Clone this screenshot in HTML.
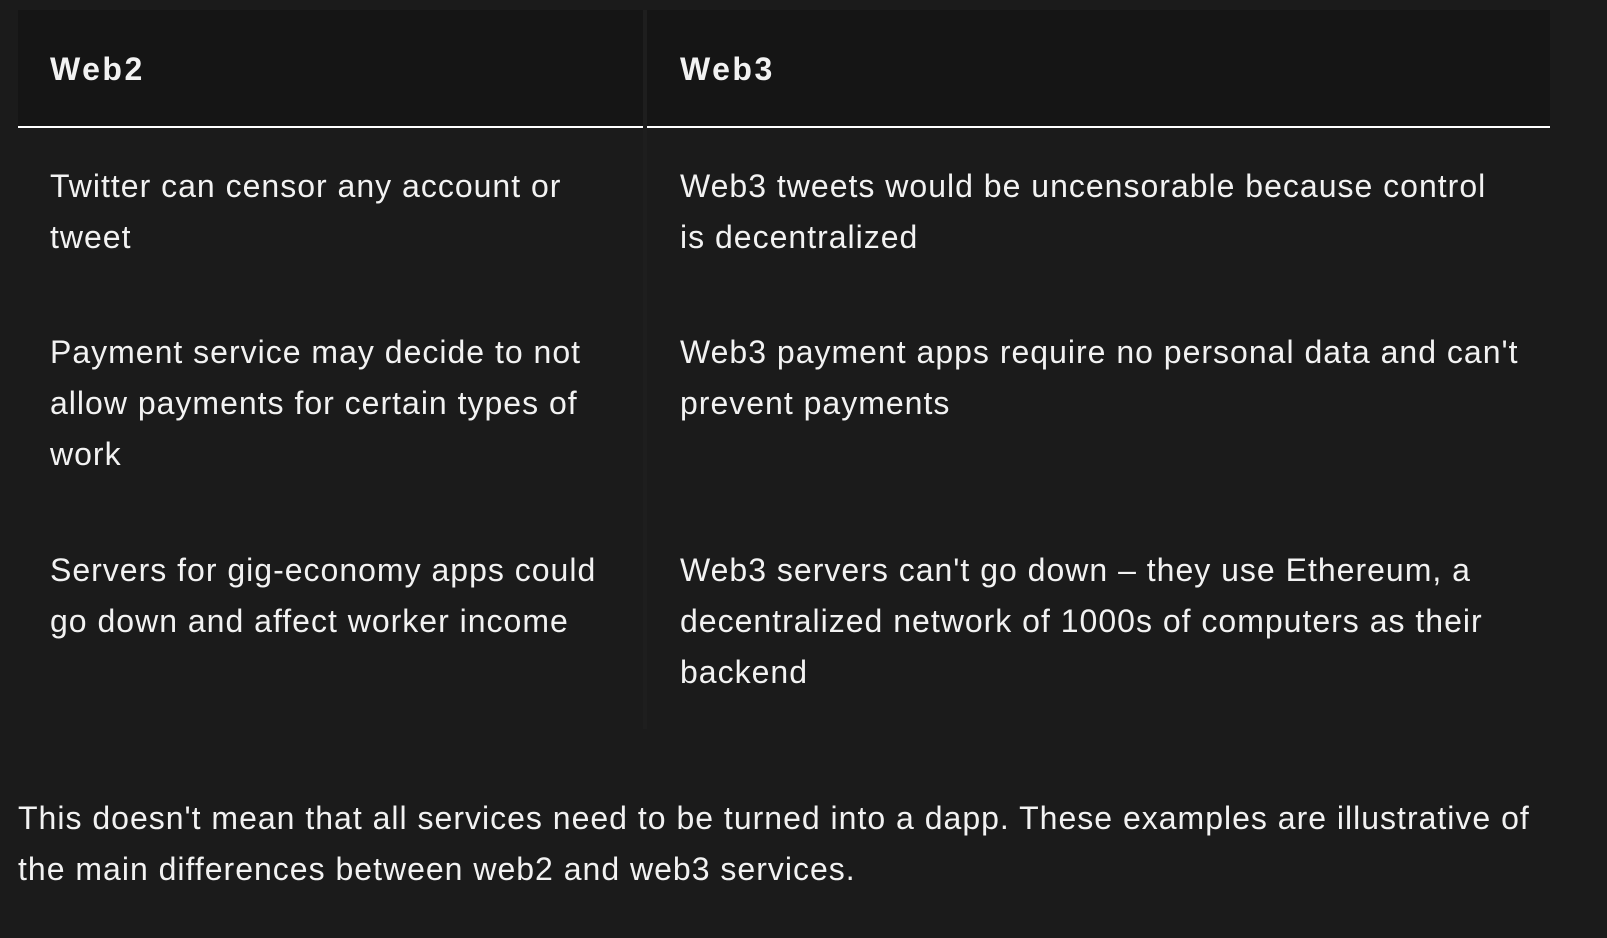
<!DOCTYPE html>
<html><head><style>
html,body{margin:0;padding:0;background:#1b1b1b;width:1607px;height:938px;overflow:hidden;}
body{position:relative;font-family:"Liberation Sans",sans-serif;color:#f2f2f2;}
.h{position:absolute;top:10px;height:116px;background:#151515;}
.ln{position:absolute;top:126px;height:2px;background:#fff;}
.div{position:absolute;left:643px;width:4px;top:10px;height:719px;background:#1e1e1e;}
.t{position:absolute;font-size:32px;line-height:51px;white-space:nowrap;letter-spacing:1px;}
.b{font-weight:bold;letter-spacing:2.5px;}
</style></head><body>
<div class="h" style="left:18px;width:625px"></div>
<div class="h" style="left:647px;width:903px"></div>
<div class="ln" style="left:18px;width:625px"></div>
<div class="ln" style="left:647px;width:903px"></div>
<div class="div"></div>
<div class="t b" style="left:50px;top:44px">Web2</div>
<div class="t b" style="left:680px;top:44px">Web3</div>
<div class="t" style="left:50px;top:161px">Twitter can censor any account or<br>tweet</div>
<div class="t" style="left:680px;top:161px">Web3 tweets would be uncensorable because control<br>is decentralized</div>
<div class="t" style="left:50px;top:327px">Payment service may decide to not<br>allow payments for certain types of<br>work</div>
<div class="t" style="left:680px;top:327px">Web3 payment apps require no personal data and can't<br>prevent payments</div>
<div class="t" style="left:50px;top:545px">Servers for gig-economy apps could<br>go down and affect worker income</div>
<div class="t" style="left:680px;top:545px">Web3 servers can't go down – they use Ethereum, a<br>decentralized network of 1000s of computers as their<br>backend</div>
<div class="t" style="left:18px;top:793px">This doesn't mean that all services need to be turned into a dapp. These examples are illustrative of<br>the main differences between web2 and web3 services.</div>
</body></html>
